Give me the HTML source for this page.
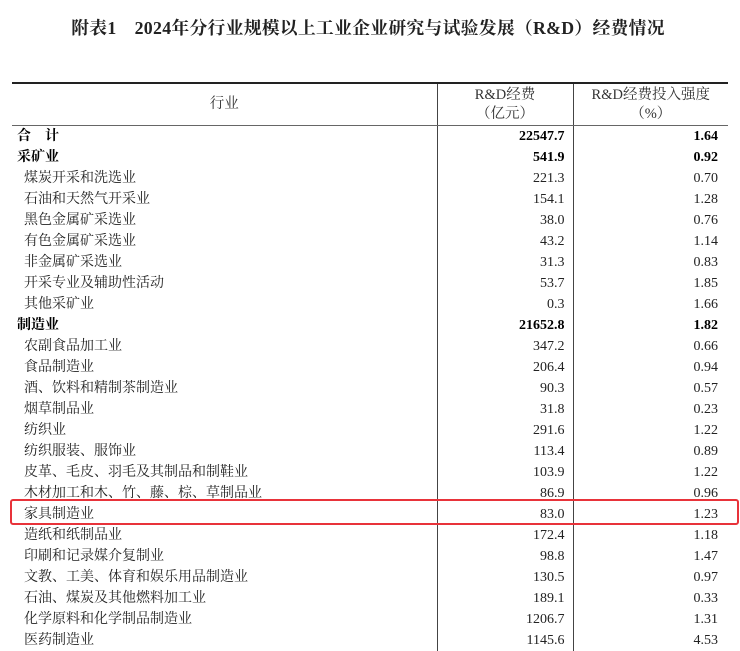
<!DOCTYPE html>
<html><head><meta charset="utf-8"><style>
body{margin:0;width:740px;height:648px;background:#fff;overflow:hidden;font-family:"Liberation Serif","Noto Serif CJK SC",serif;color:#222;position:relative}
.title{position:absolute;top:15px;left:0;width:736px;text-align:center;font-size:17.8px;font-weight:bold;letter-spacing:0.3px}
table{position:absolute;top:82px;left:12px;width:716px;border-collapse:collapse;font-size:14px;table-layout:fixed}
thead tr:first-child th{border-top:2px solid #222}
th{font-weight:normal;border-bottom:1px solid #666;height:41px;line-height:19px;padding:0;color:#333;font-size:14.5px}
td{height:21px;padding:0;line-height:21px;white-space:nowrap;overflow:hidden}
.c1{padding-left:5px}
.c2{text-align:right;padding-right:8px;border-left:1px solid #444}
.c3{text-align:right;padding-right:10px;border-left:1px solid #444}
th.c1{padding-left:0}
th.c2,th.c3{text-align:center;padding-right:0}
td.i{padding-left:12px}
tr.b td{font-weight:bold;color:#000}
.box{position:absolute;left:10px;top:499px;width:725px;height:22px;border:2px solid #e8333a;border-radius:3px}
</style></head><body>
<div class="title">附表1　2024年分行业规模以上工业企业研究与试验发展（R&amp;D）经费情况</div>
<table>
<colgroup><col style="width:425px"><col style="width:136px"><col style="width:155px"></colgroup>
<thead><tr><th class="c1">行业</th><th class="c2">R&amp;D经费<br>（亿元）</th><th class="c3">R&amp;D经费投入强度<br>（%）</th></tr></thead>
<tbody>
<tr class="b"><td class="c1">合　计</td><td class="c2">22547.7</td><td class="c3">1.64</td></tr>
<tr class="b"><td class="c1">采矿业</td><td class="c2">541.9</td><td class="c3">0.92</td></tr>
<tr><td class="c1 i">煤炭开采和洗选业</td><td class="c2">221.3</td><td class="c3">0.70</td></tr>
<tr><td class="c1 i">石油和天然气开采业</td><td class="c2">154.1</td><td class="c3">1.28</td></tr>
<tr><td class="c1 i">黑色金属矿采选业</td><td class="c2">38.0</td><td class="c3">0.76</td></tr>
<tr><td class="c1 i">有色金属矿采选业</td><td class="c2">43.2</td><td class="c3">1.14</td></tr>
<tr><td class="c1 i">非金属矿采选业</td><td class="c2">31.3</td><td class="c3">0.83</td></tr>
<tr><td class="c1 i">开采专业及辅助性活动</td><td class="c2">53.7</td><td class="c3">1.85</td></tr>
<tr><td class="c1 i">其他采矿业</td><td class="c2">0.3</td><td class="c3">1.66</td></tr>
<tr class="b"><td class="c1">制造业</td><td class="c2">21652.8</td><td class="c3">1.82</td></tr>
<tr><td class="c1 i">农副食品加工业</td><td class="c2">347.2</td><td class="c3">0.66</td></tr>
<tr><td class="c1 i">食品制造业</td><td class="c2">206.4</td><td class="c3">0.94</td></tr>
<tr><td class="c1 i">酒、饮料和精制茶制造业</td><td class="c2">90.3</td><td class="c3">0.57</td></tr>
<tr><td class="c1 i">烟草制品业</td><td class="c2">31.8</td><td class="c3">0.23</td></tr>
<tr><td class="c1 i">纺织业</td><td class="c2">291.6</td><td class="c3">1.22</td></tr>
<tr><td class="c1 i">纺织服装、服饰业</td><td class="c2">113.4</td><td class="c3">0.89</td></tr>
<tr><td class="c1 i">皮革、毛皮、羽毛及其制品和制鞋业</td><td class="c2">103.9</td><td class="c3">1.22</td></tr>
<tr><td class="c1 i">木材加工和木、竹、藤、棕、草制品业</td><td class="c2">86.9</td><td class="c3">0.96</td></tr>
<tr><td class="c1 i">家具制造业</td><td class="c2">83.0</td><td class="c3">1.23</td></tr>
<tr><td class="c1 i">造纸和纸制品业</td><td class="c2">172.4</td><td class="c3">1.18</td></tr>
<tr><td class="c1 i">印刷和记录媒介复制业</td><td class="c2">98.8</td><td class="c3">1.47</td></tr>
<tr><td class="c1 i">文教、工美、体育和娱乐用品制造业</td><td class="c2">130.5</td><td class="c3">0.97</td></tr>
<tr><td class="c1 i">石油、煤炭及其他燃料加工业</td><td class="c2">189.1</td><td class="c3">0.33</td></tr>
<tr><td class="c1 i">化学原料和化学制品制造业</td><td class="c2">1206.7</td><td class="c3">1.31</td></tr>
<tr><td class="c1 i">医药制造业</td><td class="c2">1145.6</td><td class="c3">4.53</td></tr>
</tbody></table>
<div class="box"></div>
</body></html>
